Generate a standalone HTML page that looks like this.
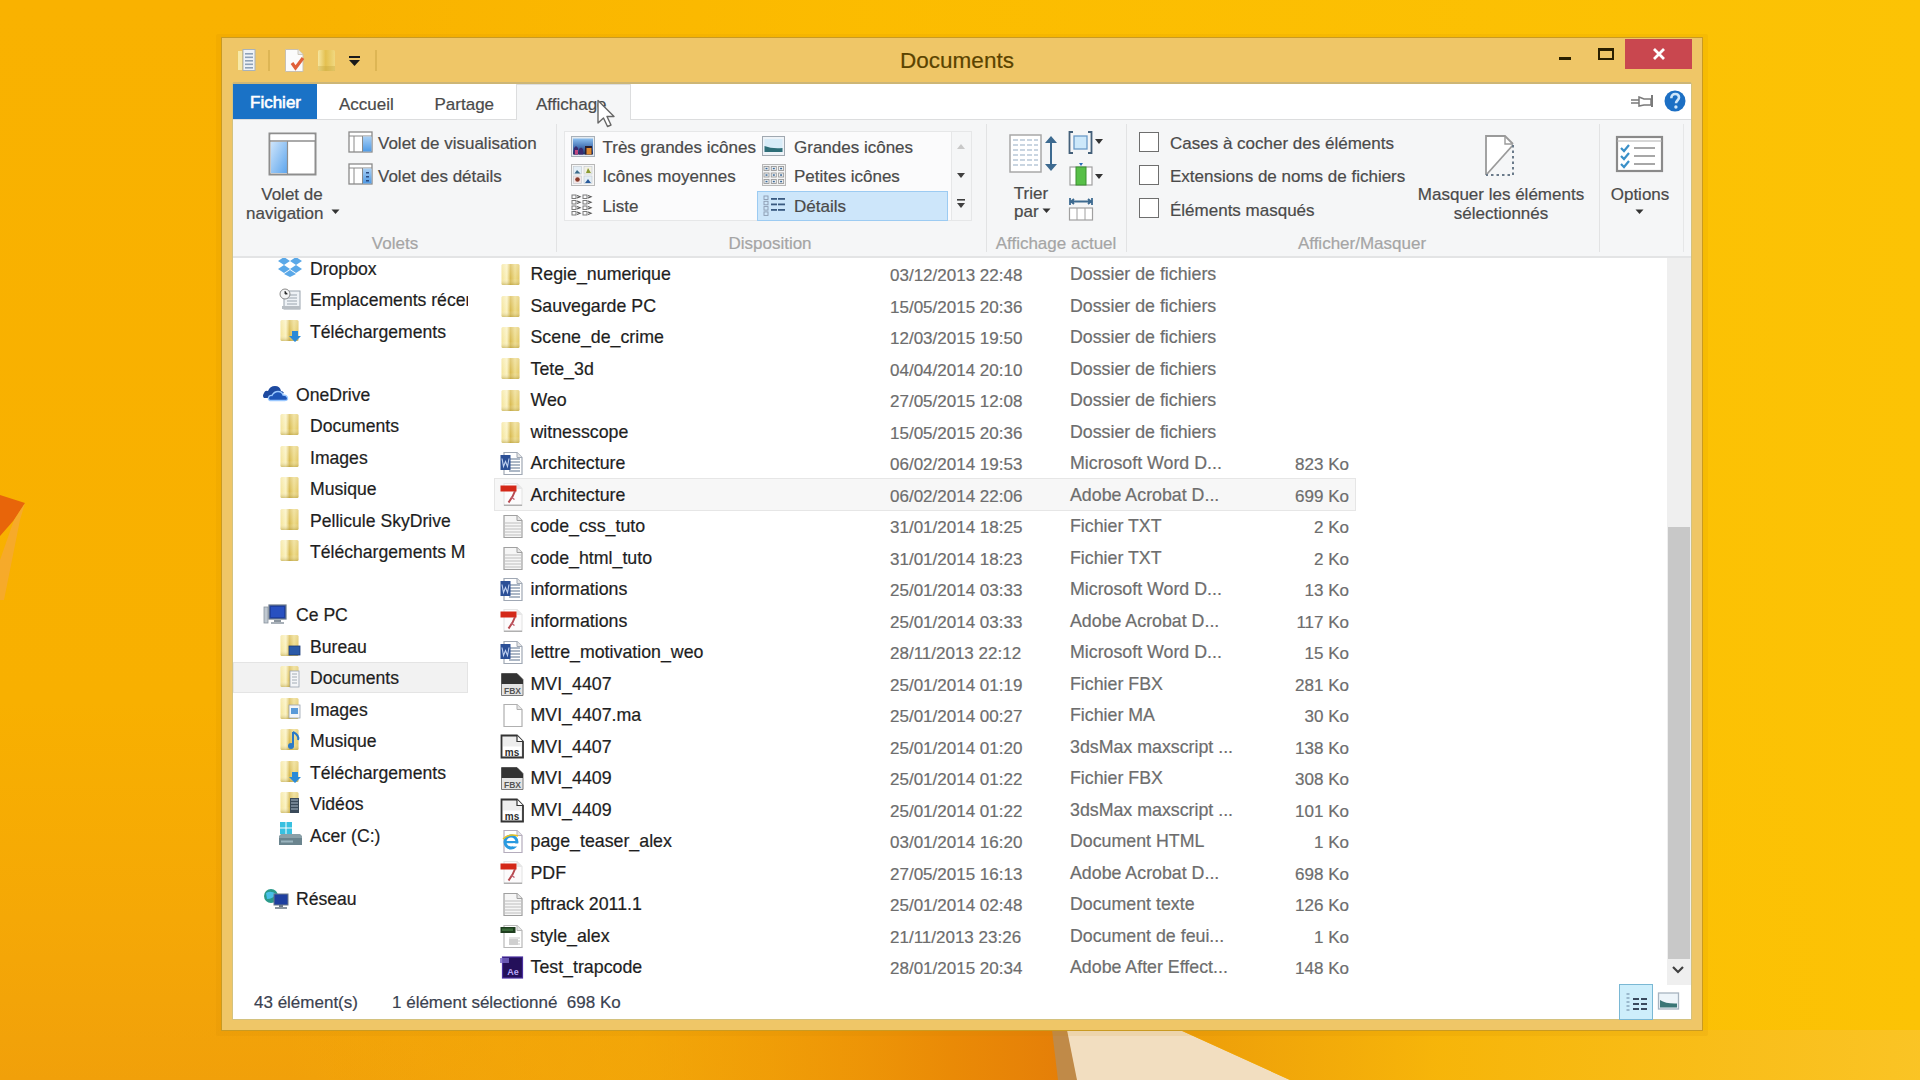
<!DOCTYPE html>
<html><head><meta charset="utf-8">
<style>
*{margin:0;padding:0;box-sizing:border-box}
html,body{width:1920px;height:1080px;overflow:hidden}
body{position:relative;font-family:"Liberation Sans",sans-serif;background:#F9B400}
.a{position:absolute}
.t{position:absolute;white-space:pre;line-height:1;color:#1E1E1E;-webkit-text-stroke:0.2px currentColor}
#w{position:absolute;left:0;top:0;width:1920px;height:1080px;}
</style></head><body>

<div id="w">
<div class="a" style="left:0;top:0;width:1920px;height:1080px;background:linear-gradient(180deg,#F9B200 0%,#F8B000 65%,#F5A806 85%,#F1A00A 100%)"></div>
<div class="a" style="left:0;top:0;width:1920px;height:1080px;background:linear-gradient(90deg,rgba(253,192,0,0) 15%,rgba(253,192,0,0.7) 45%,rgba(252,195,5,1) 100%)"></div>
<svg class="a" style="left:0px;top:0px" width="1920" height="1080" viewBox="0 0 1920 1080">
<defs>
<linearGradient id="wl" x1="0" y1="0" x2="1" y2="0"><stop offset="0" stop-color="#F2A20A" stop-opacity="0"/><stop offset="0.6" stop-color="#F0A00A" stop-opacity="0.6"/><stop offset="0.9" stop-color="#EA8A06"/><stop offset="1" stop-color="#E57F08"/></linearGradient>
<linearGradient id="wr" x1="0" y1="0" x2="1" y2="0"><stop offset="0" stop-color="#EC9A0A"/><stop offset="0.35" stop-color="#F6B40A"/><stop offset="1" stop-color="#FAC428"/></linearGradient>
</defs>
<polygon points="0,1030 1054,1030 1060,1080 0,1080" fill="url(#wl)"/>
<polygon points="1052,1030 1068,1030 1078,1080 1058,1080" fill="#C08A48"/>
<polygon points="1067,1030 1180,1030 1290,1080 1077,1080" fill="#F2DEC0"/>
<polygon points="1180,1030 1920,1030 1920,1080 1290,1080" fill="url(#wr)" opacity="0.9"/>
<polygon points="0,495 25,503 14,520 0,536" fill="#E8650A"/>
<polygon points="14,520 25,503 20,520 4,600 0,600 0,560" fill="#F5A838" opacity="0.75"/>
</svg>
<div class="a" style="left:216px;top:34px;width:1492px;height:1002px;background:rgba(200,130,0,0.10);border-radius:2px"></div>
<div class="a" style="left:221px;top:37px;width:1482px;height:994px;background:#EFC667;border:1px solid #C99A22"></div>
<div class="a" style="left:232px;top:83px;width:1460px;height:937px;border:1px solid #D4C27E"></div>
<div class="t" style="left:657px;width:600px;text-align:center;top:50.45px;font-size:22.5px;color:#5A4300;font-weight:400;">Documents</div>
<svg class="a" style="left:236px;top:48px" width="21" height="25" viewBox="0 0 21 25"><rect x="1" y="3" width="9" height="19" fill="#EBC865"/><rect x="2" y="3" width="4" height="19" fill="#F8E9A8"/>
<rect x="7" y="1.5" width="12" height="21" fill="#EEF2F6" stroke="#A8B2BC" stroke-width="1"/><rect x="9" y="5" width="8" height="1.6" fill="#8FA2B8"/><rect x="9" y="8.5" width="8" height="1.6" fill="#8FA2B8"/><rect x="9" y="12" width="8" height="1.6" fill="#8FA2B8"/><rect x="9" y="15.5" width="8" height="1.6" fill="#8FA2B8"/><rect x="9" y="19" width="8" height="1.6" fill="#8FA2B8"/></svg>
<div class="a" style="left:268px;top:50px;width:2px;height:21px;background:#D8B050;opacity:.8"></div>
<svg class="a" style="left:284px;top:48px" width="22" height="25" viewBox="0 0 22 25"><path d="M1.5 1.5 H14 L19 6.5 V23.5 H1.5 Z" fill="#FBFBFB" stroke="#C8C0B0" stroke-width="1"/><path d="M14 1.5 V6.5 H19" fill="#E8E8E8" stroke="#C8C0B0" stroke-width="0.8"/>
<path d="M8 15 L11.5 20 L19 10" stroke="#E0603A" stroke-width="3.2" fill="none"/></svg>
<svg class="a" style="left:316px;top:48px" width="22" height="25" viewBox="0 0 22 25"><defs><linearGradient id="qf" x1="0" y1="0" x2="1" y2="0"><stop offset="0" stop-color="#F6E6A0"/><stop offset="0.45" stop-color="#E4C050"/><stop offset="1" stop-color="#F0D880"/></linearGradient></defs><rect x="2" y="2" width="17" height="21" rx="1.5" fill="url(#qf)"/><rect x="2" y="18" width="17" height="5" fill="#C8A840" opacity="0.4"/></svg>
<svg class="a" style="left:348px;top:55px" width="13" height="14" viewBox="0 0 13 14"><rect x="1" y="1" width="11" height="2" fill="#1A1A1A"/><path d="M1 5 H12 L6.5 11 Z" fill="#1A1A1A"/></svg>
<div class="a" style="left:375px;top:50px;width:2px;height:21px;background:#D8B050;opacity:.8"></div>
<div class="a" style="left:1559px;top:57px;width:12px;height:3px;background:#2A2000"></div>
<div class="a" style="left:1598px;top:48px;width:16px;height:12px;border:2px solid #2A2000;border-top-width:3px"></div>
<div class="a" style="left:1625px;top:39px;width:67px;height:30px;background:#C9474F"></div>
<svg class="a" style="left:1652px;top:47px" width="14" height="14" viewBox="0 0 14 14"><path d="M2 2 L12 12 M12 2 L2 12" stroke="#FFFFFF" stroke-width="2.8"/></svg>
<div class="a" style="left:233px;top:84px;width:1458px;height:935px;background:#FFFFFF"></div>
<div class="a" style="left:233px;top:82px;width:1458px;height:2px;background:#CDB676"></div>
<div class="a" style="left:233px;top:119px;width:1458px;height:139px;background:#F5F6F7;border-top:1px solid #DCDDDE;border-bottom:2px solid #E3E4E5"></div>
<div class="a" style="left:233px;top:84px;width:84px;height:35px;background:#1A72C6"></div>
<div class="t" style="left:250px;top:94.11px;font-size:17px;color:#FFFFFF;font-weight:400;-webkit-text-stroke:0.6px #FFFFFF">Fichier</div>
<div class="t" style="left:339px;top:95.61px;font-size:17px;color:#4A4A4A;font-weight:400;">Accueil</div>
<div class="t" style="left:434.5px;top:95.61px;font-size:17px;color:#4A4A4A;font-weight:400;">Partage</div>
<div class="a" style="left:516px;top:84px;width:115px;height:36px;background:#F5F6F7;border:1px solid #DCDDDE;border-bottom:none"></div>
<div class="t" style="left:536px;top:96.11px;font-size:17px;color:#4A4A4A;font-weight:400;">Affichage</div>
<svg class="a" style="left:1630px;top:93px" width="26" height="16" viewBox="0 0 26 16"><path d="M1 7 H9 M1 10 H9" stroke="#7A7A7A" stroke-width="1.4"/><path d="M9 4 L14 6 H21 V12 H14 L9 13 Z" fill="none" stroke="#7A7A7A" stroke-width="1.5"/><path d="M22 2 V14" stroke="#7A7A7A" stroke-width="2"/></svg>
<svg class="a" style="left:1663px;top:89px" width="24" height="24" viewBox="0 0 24 24"><circle cx="12" cy="12" r="10.5" fill="#1C6FC4"/><path d="M8.3 9.2 C8.3 6.5 10 5 12.2 5 C14.5 5 16 6.5 16 8.6 C16 11 13 11.5 13 14.2" fill="none" stroke="#CFE6FA" stroke-width="2.6"/><circle cx="12.9" cy="18" r="1.7" fill="#CFE6FA"/></svg>
<svg class="a" style="left:268px;top:132px" width="50" height="45" viewBox="0 0 50 45"><rect x="1.5" y="1.5" width="46" height="41" fill="#FFFFFF" stroke="#8E8E8E" stroke-width="2"/><rect x="2.5" y="2.5" width="44" height="6" fill="#FFFFFF"/><line x1="2" y1="9" x2="47" y2="9" stroke="#8E8E8E" stroke-width="1.5"/>
<defs><linearGradient id="np" x1="0" y1="0" x2="1" y2="1"><stop offset="0" stop-color="#CDE4FA"/><stop offset="1" stop-color="#5EA6EE"/></linearGradient></defs>
<rect x="3" y="10" width="16" height="31" fill="url(#np)"/><line x1="19.5" y1="9" x2="19.5" y2="42" stroke="#8E8E8E" stroke-width="1.2"/></svg>
<div class="t" style="left:-8px;width:600px;text-align:center;top:186.01px;font-size:17px;color:#4A4A4A;font-weight:400;">Volet de</div>
<div class="t" style="left:246px;top:204.91px;font-size:17px;color:#4A4A4A;font-weight:400;">navigation</div>
<svg class="a" style="left:331px;top:209px" width="9" height="6" viewBox="0 0 9 6"><path d="M0.5 0.5 H8.5 L4.5 5 Z" fill="#333"/></svg>
<svg class="a" style="left:348px;top:131px" width="25" height="22" viewBox="0 0 25 22"><defs><linearGradient id="vp" x1="0" y1="0" x2="0" y2="1"><stop offset="0" stop-color="#A9D0F5"/><stop offset="1" stop-color="#4F9BE6"/></linearGradient></defs>
<rect x="1" y="1" width="23" height="20" fill="#FFF" stroke="#8A8A8A" stroke-width="1.3"/><line x1="1" y1="5" x2="24" y2="5" stroke="#8A8A8A" stroke-width="1"/><line x1="6" y1="5" x2="6" y2="21" stroke="#8A8A8A" stroke-width="1"/><rect x="15" y="5.5" width="8.5" height="15" fill="url(#vp)"/><line x1="14.5" y1="5" x2="14.5" y2="21" stroke="#8A8A8A" stroke-width="1"/></svg>
<div class="t" style="left:378px;top:135.31px;font-size:17px;color:#4A4A4A;font-weight:400;">Volet de visualisation</div>
<svg class="a" style="left:348px;top:163px" width="25" height="22" viewBox="0 0 25 22"><rect x="1" y="1" width="23" height="20" fill="#FFF" stroke="#8A8A8A" stroke-width="1.3"/><line x1="1" y1="5" x2="24" y2="5" stroke="#8A8A8A" stroke-width="1"/><line x1="6" y1="5" x2="6" y2="21" stroke="#8A8A8A" stroke-width="1"/><rect x="15" y="5.5" width="8.5" height="15" fill="url(#vp)"/><line x1="14.5" y1="5" x2="14.5" y2="21" stroke="#8A8A8A" stroke-width="1"/><rect x="18" y="9" width="3" height="1.5" fill="#2A4A80"/><rect x="18" y="13" width="3" height="1.5" fill="#2A4A80"/><rect x="18" y="17" width="3" height="1.5" fill="#2A4A80"/></svg>
<div class="t" style="left:378px;top:168.01px;font-size:17px;color:#4A4A4A;font-weight:400;">Volet des détails</div>
<div class="t" style="left:95px;width:600px;text-align:center;top:234.61px;font-size:17px;color:#A5A5A5;font-weight:400;">Volets</div>
<div class="a" style="left:556px;top:124px;width:1px;height:128px;background:#E2E3E4"></div>
<div class="a" style="left:564px;top:131px;width:408px;height:90px;background:#FBFBFC;border:1px solid #E6E7E8"></div>
<div class="a" style="left:951px;top:132px;width:20px;height:88px;background:#F5F6F7;border-left:1px solid #E6E7E8"></div>
<svg class="a" style="left:955px;top:140px" width="12" height="75" viewBox="0 0 12 75"><path d="M2 9 H10 L6 4 Z" fill="#C8C8C8"/><path d="M2 33 H10 L6 38 Z" fill="#404040"/><rect x="2" y="59" width="8" height="1.6" fill="#404040"/><path d="M2 63 H10 L6 68 Z" fill="#404040"/></svg>
<div class="a" style="left:757px;top:191px;width:191px;height:30px;background:#CDE6FA;border:1px solid #9CCBF2"></div>
<svg class="a" style="left:571px;top:136px" width="24" height="21" viewBox="0 0 24 21"><defs><linearGradient id="xlg" x1="0" y1="0" x2="0" y2="1"><stop offset="0" stop-color="#8CC0F0"/><stop offset="0.5" stop-color="#4A78B8"/><stop offset="1" stop-color="#1E2A60"/></linearGradient></defs><rect x="0.5" y="0.5" width="23" height="20" fill="#E4EAF0" stroke="#A8B0B8"/><rect x="2" y="2.5" width="20" height="16" fill="url(#xlg)"/><path d="M3 18.5 V12 L5 10 L7 12 V18.5 Z M8 18.5 V13 L10 11.5 L12 13 V18.5 Z" fill="#3A2A70"/><path d="M4 18.5 V14 H7 V18.5 Z" fill="#C04880"/><rect x="14" y="10" width="7" height="8.5" fill="#2A2030"/><rect x="15.5" y="12" width="5" height="6.5" fill="#E08A30"/></svg>
<div class="t" style="left:602.5px;top:139.11px;font-size:17px;color:#4A4A4A;font-weight:400;">Très grandes icônes</div>
<svg class="a" style="left:762px;top:136px" width="23" height="20" viewBox="0 0 23 20"><rect x="0.5" y="0.5" width="22" height="19" fill="#EEF3F8" stroke="#A0A8B0"/><rect x="2.5" y="3" width="18" height="13" fill="#D8ECF8"/><path d="M2.5 16 L2.5 10 Q10 13 20.5 12 V16 Z" fill="#2E6E78"/></svg>
<div class="t" style="left:794px;top:139.11px;font-size:17px;color:#4A4A4A;font-weight:400;">Grandes icônes</div>
<svg class="a" style="left:571px;top:164px" width="24" height="22" viewBox="0 0 24 22"><rect x="0.5" y="0.5" width="23" height="21" fill="#F6F6F6" stroke="#B8B8B8"/><rect x="2.5" y="2.5" width="8" height="7.5" fill="#E4EEF6" stroke="#C0C8D0" stroke-width="0.6"/><path d="M3.5 9.5 L6 6 L9.5 9.5 Z" fill="#3A6A8A"/><rect x="13" y="2.5" width="8" height="7.5" fill="#F2F0E4" stroke="#C0C8D0" stroke-width="0.6"/><path d="M15 9 L17 4 L20 9 Z" fill="#8A9A30"/><rect x="2.5" y="12" width="8" height="7.5" fill="#F4E6E6" stroke="#C0C8D0" stroke-width="0.6"/><circle cx="6.5" cy="15.5" r="2.3" fill="#8A3A2A"/><rect x="13" y="12" width="8" height="7.5" fill="#E4EEF6" stroke="#C0C8D0" stroke-width="0.6"/><path d="M14 19 L17 15 L20 19 Z" fill="#2A5A9A"/></svg>
<div class="t" style="left:602.5px;top:168.11px;font-size:17px;color:#4A4A4A;font-weight:400;">Icônes moyennes</div>
<svg class="a" style="left:762px;top:164px" width="24" height="22" viewBox="0 0 24 22"><rect x="0.5" y="0.5" width="23" height="21" fill="#F4F4F4" stroke="#B8B8B8"/><rect x="2.0" y="2.5" width="5" height="4" fill="none" stroke="#9A9A9A" stroke-width="0.9"/><rect x="3.5" y="3.8" width="2" height="1.5" fill="#3A6A9A"/><rect x="9.3" y="2.5" width="5" height="4" fill="none" stroke="#9A9A9A" stroke-width="0.9"/><rect x="10.8" y="3.8" width="2" height="1.5" fill="#3A6A9A"/><rect x="16.6" y="2.5" width="5" height="4" fill="none" stroke="#9A9A9A" stroke-width="0.9"/><rect x="18.1" y="3.8" width="2" height="1.5" fill="#3A6A9A"/><rect x="2.0" y="9.0" width="5" height="4" fill="none" stroke="#9A9A9A" stroke-width="0.9"/><rect x="3.5" y="10.3" width="2" height="1.5" fill="#3A6A9A"/><rect x="9.3" y="9.0" width="5" height="4" fill="none" stroke="#9A9A9A" stroke-width="0.9"/><rect x="10.8" y="10.3" width="2" height="1.5" fill="#3A6A9A"/><rect x="16.6" y="9.0" width="5" height="4" fill="none" stroke="#9A9A9A" stroke-width="0.9"/><rect x="18.1" y="10.3" width="2" height="1.5" fill="#3A6A9A"/><rect x="2.0" y="15.5" width="5" height="4" fill="none" stroke="#9A9A9A" stroke-width="0.9"/><rect x="3.5" y="16.8" width="2" height="1.5" fill="#3A6A9A"/><rect x="9.3" y="15.5" width="5" height="4" fill="none" stroke="#9A9A9A" stroke-width="0.9"/><rect x="10.8" y="16.8" width="2" height="1.5" fill="#3A6A9A"/><rect x="16.6" y="15.5" width="5" height="4" fill="none" stroke="#9A9A9A" stroke-width="0.9"/><rect x="18.1" y="16.8" width="2" height="1.5" fill="#3A6A9A"/></svg>
<div class="t" style="left:794px;top:168.11px;font-size:17px;color:#4A4A4A;font-weight:400;">Petites icônes</div>
<svg class="a" style="left:571px;top:194px" width="23" height="22" viewBox="0 0 23 22"><rect x="1" y="1.0" width="4" height="3.5" fill="none" stroke="#7A7A7A" stroke-width="1"/><path d="M6 1.5 L9 2.75 L6 4.0" fill="none" stroke="#5A5A5A" stroke-width="1.2"/><rect x="12" y="1.0" width="4" height="3.5" fill="none" stroke="#7A7A7A" stroke-width="1"/><path d="M17 1.5 L20 2.75 L17 4.0" fill="none" stroke="#5A5A5A" stroke-width="1.2"/><rect x="1" y="6.5" width="4" height="3.5" fill="none" stroke="#7A7A7A" stroke-width="1"/><path d="M6 7.0 L9 8.25 L6 9.5" fill="none" stroke="#5A5A5A" stroke-width="1.2"/><rect x="12" y="6.5" width="4" height="3.5" fill="none" stroke="#7A7A7A" stroke-width="1"/><path d="M17 7.0 L20 8.25 L17 9.5" fill="none" stroke="#5A5A5A" stroke-width="1.2"/><rect x="1" y="12.0" width="4" height="3.5" fill="none" stroke="#7A7A7A" stroke-width="1"/><path d="M6 12.5 L9 13.75 L6 15.0" fill="none" stroke="#5A5A5A" stroke-width="1.2"/><rect x="12" y="12.0" width="4" height="3.5" fill="none" stroke="#7A7A7A" stroke-width="1"/><path d="M17 12.5 L20 13.75 L17 15.0" fill="none" stroke="#5A5A5A" stroke-width="1.2"/><rect x="1" y="17.5" width="4" height="3.5" fill="none" stroke="#7A7A7A" stroke-width="1"/><path d="M6 18.0 L9 19.25 L6 20.5" fill="none" stroke="#5A5A5A" stroke-width="1.2"/><rect x="12" y="17.5" width="4" height="3.5" fill="none" stroke="#7A7A7A" stroke-width="1"/><path d="M17 18.0 L20 19.25 L17 20.5" fill="none" stroke="#5A5A5A" stroke-width="1.2"/></svg>
<div class="t" style="left:602.5px;top:198.11px;font-size:17px;color:#4A4A4A;font-weight:400;">Liste</div>
<svg class="a" style="left:763px;top:195px" width="23" height="22" viewBox="0 0 23 22"><rect x="1" y="1.0" width="4" height="3.5" fill="none" stroke="#8A9AB0" stroke-width="0.9"/><rect x="1" y="6.3" width="4" height="3.5" fill="none" stroke="#8A9AB0" stroke-width="0.9"/><rect x="1" y="11.6" width="4" height="3.5" fill="none" stroke="#8A9AB0" stroke-width="0.9"/><rect x="1" y="16.9" width="4" height="3.5" fill="none" stroke="#8A9AB0" stroke-width="0.9"/><rect x="8" y="3.0" width="6" height="1.8" fill="#3A5A80"/><rect x="15" y="3.0" width="7" height="1.8" fill="#3A5A80"/><rect x="8" y="8.5" width="6" height="1.8" fill="#3A5A80"/><rect x="15" y="8.5" width="7" height="1.8" fill="#3A5A80"/><rect x="8" y="14.0" width="6" height="1.8" fill="#3A5A80"/><rect x="15" y="14.0" width="7" height="1.8" fill="#3A5A80"/></svg>
<div class="t" style="left:794px;top:198.11px;font-size:17px;color:#4A4A4A;font-weight:400;">Détails</div>
<div class="t" style="left:470px;width:600px;text-align:center;top:234.61px;font-size:17px;color:#A5A5A5;font-weight:400;">Disposition</div>
<div class="a" style="left:986px;top:124px;width:1px;height:128px;background:#E2E3E4"></div>
<svg class="a" style="left:1008px;top:133px" width="52" height="42" viewBox="0 0 52 42"><rect x="2" y="2" width="31" height="37" fill="#FFFFFF" stroke="#A8A8A8" stroke-width="1.5"/>
<g stroke="#B8C8D8" stroke-width="1.6"><line x1="5" y1="7" x2="30" y2="7" stroke-dasharray="5 2"/><line x1="5" y1="12" x2="30" y2="12" stroke-dasharray="5 2"/><line x1="5" y1="17" x2="30" y2="17" stroke-dasharray="5 2"/><line x1="5" y1="22" x2="30" y2="22" stroke-dasharray="5 2"/><line x1="5" y1="27" x2="30" y2="27" stroke-dasharray="5 2"/><line x1="5" y1="32" x2="30" y2="32" stroke-dasharray="5 2"/></g>
<path d="M43 3 L37 10 H42 V31 H37 L43 38 L49 31 H44 V10 H49 Z" fill="#3D6A90"/></svg>
<div class="t" style="left:731px;width:600px;text-align:center;top:185.41px;font-size:17px;color:#4A4A4A;font-weight:400;">Trier</div>
<div class="t" style="left:1014px;top:203.11px;font-size:17px;color:#4A4A4A;font-weight:400;">par</div>
<svg class="a" style="left:1042px;top:208px" width="9" height="6" viewBox="0 0 9 6"><path d="M0.5 0.5 H8.5 L4.5 5 Z" fill="#333"/></svg>
<svg class="a" style="left:1068px;top:130px" width="38" height="26" viewBox="0 0 38 26"><path d="M5 2 H1.5 V23 H5 M20 2 H23.5 V23 H20" stroke="#44607A" stroke-width="1.8" fill="none"/><rect x="6" y="6" width="13" height="13" fill="#CDE8FA" stroke="#6A9AC8" stroke-width="1.3"/><path d="M27 9 H35 L31 14 Z" fill="#333"/></svg>
<svg class="a" style="left:1068px;top:162px" width="38" height="26" viewBox="0 0 38 26"><rect x="2" y="5" width="22" height="18" fill="#FFF" stroke="#A0A0A0" stroke-width="1.2"/><rect x="8" y="5" width="10" height="18" fill="#58C048" stroke="#3A9030" stroke-width="1"/><path d="M11 1 H15 L13 4 Z" fill="#2A6CB8"/><path d="M27 12 H35 L31 17 Z" fill="#333"/></svg>
<svg class="a" style="left:1068px;top:195px" width="26" height="27" viewBox="0 0 26 27"><path d="M2 3 V10 M24 3 V10 M3 6.5 H23 M3 6.5 L6 4 M3 6.5 L6 9 M23 6.5 L20 4 M23 6.5 L20 9" stroke="#3D6A90" stroke-width="1.8" fill="none"/><rect x="1.5" y="13" width="23" height="12" fill="#FFF" stroke="#A0A0A0" stroke-width="1.2"/><line x1="9" y1="13" x2="9" y2="25" stroke="#A0A0A0"/><line x1="17" y1="13" x2="17" y2="25" stroke="#A0A0A0"/></svg>
<div class="t" style="left:756px;width:600px;text-align:center;top:234.61px;font-size:17px;color:#A5A5A5;font-weight:400;">Affichage actuel</div>
<div class="a" style="left:1126px;top:124px;width:1px;height:128px;background:#E2E3E4"></div>
<div class="a" style="left:1139px;top:132px;width:20px;height:20px;background:#FFFFFF;border:1.5px solid #6E6E6E"></div>
<div class="a" style="left:1139px;top:165px;width:20px;height:20px;background:#FFFFFF;border:1.5px solid #6E6E6E"></div>
<div class="a" style="left:1139px;top:198px;width:20px;height:20px;background:#FFFFFF;border:1.5px solid #6E6E6E"></div>
<div class="t" style="left:1170px;top:135.36px;font-size:17px;color:#4A4A4A;font-weight:400;">Cases à cocher des éléments</div>
<div class="t" style="left:1170px;top:168.11px;font-size:17px;color:#4A4A4A;font-weight:400;">Extensions de noms de fichiers</div>
<div class="t" style="left:1170px;top:201.61px;font-size:17px;color:#4A4A4A;font-weight:400;">Éléments masqués</div>
<svg class="a" style="left:1483px;top:133px" width="40" height="46" viewBox="0 0 40 46"><path d="M3 42 V3 H22 L30 11" fill="#FFFFFF" stroke="#9A9A9A" stroke-width="1.8"/><path d="M22 3 V11 H30" fill="none" stroke="#9A9A9A" stroke-width="1.4"/><path d="M4 41 L30 12" stroke="#9A9A9A" stroke-width="1.8"/><path d="M30 12 V42 H3" fill="none" stroke="#6A7A8A" stroke-width="2" stroke-dasharray="2.5 3"/></svg>
<div class="t" style="left:1201px;width:600px;text-align:center;top:185.61px;font-size:17px;color:#4A4A4A;font-weight:400;">Masquer les éléments</div>
<div class="t" style="left:1201px;width:600px;text-align:center;top:204.61px;font-size:17px;color:#4A4A4A;font-weight:400;">sélectionnés</div>
<div class="t" style="left:1062px;width:600px;text-align:center;top:234.61px;font-size:17px;color:#A5A5A5;font-weight:400;">Afficher/Masquer</div>
<div class="a" style="left:1599px;top:124px;width:1px;height:128px;background:#E2E3E4"></div>
<svg class="a" style="left:1615px;top:135px" width="50" height="40" viewBox="0 0 50 40"><rect x="2" y="2" width="45" height="34" fill="#FFFFFF" stroke="#8A8A8A" stroke-width="2.2"/><line x1="2" y1="6" x2="47" y2="6" stroke="#B0B0B0" stroke-width="1.2"/>
<path d="M6 13 L9 16 L14 10 M6 21 L9 24 L14 18 M6 29 L9 32 L14 26" stroke="#3A90C8" stroke-width="2.2" fill="none"/>
<path d="M19 13 H40 M19 21 H40 M19 29 H40" stroke="#8A8A8A" stroke-width="1.6"/></svg>
<div class="t" style="left:1340px;width:600px;text-align:center;top:185.61px;font-size:17px;color:#4A4A4A;font-weight:400;">Options</div>
<svg class="a" style="left:1635px;top:209px" width="9" height="6" viewBox="0 0 9 6"><path d="M0.5 0.5 H8.5 L4.5 5 Z" fill="#333"/></svg>
<div class="a" style="left:1683px;top:124px;width:1px;height:128px;background:#E6E7E8"></div>
<div class="a" style="left:233px;top:662px;width:235px;height:31px;background:#F2F2F2;border:1px solid #E4E4E4"></div>
<div class="a" style="left:0;top:0;width:1920px;height:1080px;clip-path:polygon(233px 258px,468px 258px,468px 985px,233px 985px)">
<div class="t" style="left:310px;top:260.50px;font-size:17.6px;color:#1E1E1E;font-weight:400;">Dropbox</div>
<svg class="a" style="left:277px;top:256px" width="26" height="22" viewBox="0 0 26 22"><path d="M7 1 L1 5 L7 9 L13 5 Z M19 1 L13 5 L19 9 L25 5 Z M1 13 L7 9 L13 13 L7 17 Z M25 13 L19 9 L13 13 L19 17 Z M7 18 L13 14 L19 18 L13 21 Z" fill="#5AA8E8"/></svg>
<div class="t" style="left:310px;top:292.00px;font-size:17.6px;color:#1E1E1E;font-weight:400;">Emplacements récents</div>
<svg class="a" style="left:279px;top:288px" width="24" height="23" viewBox="0 0 24 23"><rect x="5" y="3" width="16" height="18" fill="#EEF2F6" stroke="#9AA4AE"/><path d="M8 7 H18 M8 10 H18 M8 13 H18 M8 16 H18" stroke="#9AA4AE" stroke-width="1.2"/><circle cx="6" cy="6" r="5" fill="#F4F4F4" stroke="#8A8A8A"/><path d="M6 3 V6 H8.5" stroke="#444" stroke-width="1"/><rect x="3" y="18" width="18" height="3" fill="#B8BEC4"/></svg>
<div class="t" style="left:310px;top:323.50px;font-size:17.6px;color:#1E1E1E;font-weight:400;">Téléchargements</div>
<svg class="a" style="left:279px;top:319px" width="22" height="23" viewBox="0 0 22 23"><defs><linearGradient id="fg279_319" x1="0" y1="0" x2="1" y2="0"><stop offset="0" stop-color="#F4E49A"/><stop offset="0.3" stop-color="#FBF3C4"/><stop offset="0.5" stop-color="#D9BC55"/><stop offset="0.75" stop-color="#EEDC8C"/><stop offset="1" stop-color="#E2C868"/></linearGradient>
<linearGradient id="fg279_319b" x1="0" y1="0" x2="0" y2="1"><stop offset="0" stop-color="#FFFFFF" stop-opacity="0.25"/><stop offset="0.7" stop-color="#FFFFFF" stop-opacity="0"/><stop offset="1" stop-color="#A89030" stop-opacity="0.45"/></linearGradient></defs>
<path d="M1.5 2.5 Q1.5 1 3 1 H18 Q19.5 1 19.5 2.5 V20.5 Q19.5 22 18 22 H3 Q1.5 22 1.5 20.5 Z" fill="url(#fg279_319)"/><path d="M1.5 2.5 Q1.5 1 3 1 H18 Q19.5 1 19.5 2.5 V20.5 Q19.5 22 18 22 H3 Q1.5 22 1.5 20.5 Z" fill="url(#fg279_319b)"/><path d="M13 12 H19 V17 H22 L16 23 L10 17 H13 Z" fill="#2A8AD8"/></svg>
<div class="t" style="left:296px;top:386.50px;font-size:17.6px;color:#1E1E1E;font-weight:400;">OneDrive</div>
<svg class="a" style="left:262px;top:383px" width="28" height="20" viewBox="0 0 28 20"><path d="M2 15 Q0 13 2 10 Q3 7 6 8 Q8 3 13 3 Q18 3 19 8 Q21 8 22 10 L10 15 Z" fill="#1E4AA0"/><path d="M8 17.5 Q6 17 6.5 14.5 Q7 12 10 12.5 Q12 8.5 16 8.5 Q20 8.5 21 12 Q25 12 25.5 15 Q26 17.5 23 17.5 Z" fill="#1E56B8" stroke="#9AC8FF" stroke-width="1.3"/></svg>
<div class="t" style="left:310px;top:418.00px;font-size:17.6px;color:#1E1E1E;font-weight:400;">Documents</div>
<svg class="a" style="left:279px;top:413px" width="22" height="23" viewBox="0 0 22 23"><defs><linearGradient id="fg279_413" x1="0" y1="0" x2="1" y2="0"><stop offset="0" stop-color="#F4E49A"/><stop offset="0.3" stop-color="#FBF3C4"/><stop offset="0.5" stop-color="#D9BC55"/><stop offset="0.75" stop-color="#EEDC8C"/><stop offset="1" stop-color="#E2C868"/></linearGradient>
<linearGradient id="fg279_413b" x1="0" y1="0" x2="0" y2="1"><stop offset="0" stop-color="#FFFFFF" stop-opacity="0.25"/><stop offset="0.7" stop-color="#FFFFFF" stop-opacity="0"/><stop offset="1" stop-color="#A89030" stop-opacity="0.45"/></linearGradient></defs>
<path d="M1.5 2.5 Q1.5 1 3 1 H18 Q19.5 1 19.5 2.5 V20.5 Q19.5 22 18 22 H3 Q1.5 22 1.5 20.5 Z" fill="url(#fg279_413)"/><path d="M1.5 2.5 Q1.5 1 3 1 H18 Q19.5 1 19.5 2.5 V20.5 Q19.5 22 18 22 H3 Q1.5 22 1.5 20.5 Z" fill="url(#fg279_413b)"/></svg>
<div class="t" style="left:310px;top:449.50px;font-size:17.6px;color:#1E1E1E;font-weight:400;">Images</div>
<svg class="a" style="left:279px;top:445px" width="22" height="23" viewBox="0 0 22 23"><defs><linearGradient id="fg279_445" x1="0" y1="0" x2="1" y2="0"><stop offset="0" stop-color="#F4E49A"/><stop offset="0.3" stop-color="#FBF3C4"/><stop offset="0.5" stop-color="#D9BC55"/><stop offset="0.75" stop-color="#EEDC8C"/><stop offset="1" stop-color="#E2C868"/></linearGradient>
<linearGradient id="fg279_445b" x1="0" y1="0" x2="0" y2="1"><stop offset="0" stop-color="#FFFFFF" stop-opacity="0.25"/><stop offset="0.7" stop-color="#FFFFFF" stop-opacity="0"/><stop offset="1" stop-color="#A89030" stop-opacity="0.45"/></linearGradient></defs>
<path d="M1.5 2.5 Q1.5 1 3 1 H18 Q19.5 1 19.5 2.5 V20.5 Q19.5 22 18 22 H3 Q1.5 22 1.5 20.5 Z" fill="url(#fg279_445)"/><path d="M1.5 2.5 Q1.5 1 3 1 H18 Q19.5 1 19.5 2.5 V20.5 Q19.5 22 18 22 H3 Q1.5 22 1.5 20.5 Z" fill="url(#fg279_445b)"/></svg>
<div class="t" style="left:310px;top:481.00px;font-size:17.6px;color:#1E1E1E;font-weight:400;">Musique</div>
<svg class="a" style="left:279px;top:476px" width="22" height="23" viewBox="0 0 22 23"><defs><linearGradient id="fg279_476" x1="0" y1="0" x2="1" y2="0"><stop offset="0" stop-color="#F4E49A"/><stop offset="0.3" stop-color="#FBF3C4"/><stop offset="0.5" stop-color="#D9BC55"/><stop offset="0.75" stop-color="#EEDC8C"/><stop offset="1" stop-color="#E2C868"/></linearGradient>
<linearGradient id="fg279_476b" x1="0" y1="0" x2="0" y2="1"><stop offset="0" stop-color="#FFFFFF" stop-opacity="0.25"/><stop offset="0.7" stop-color="#FFFFFF" stop-opacity="0"/><stop offset="1" stop-color="#A89030" stop-opacity="0.45"/></linearGradient></defs>
<path d="M1.5 2.5 Q1.5 1 3 1 H18 Q19.5 1 19.5 2.5 V20.5 Q19.5 22 18 22 H3 Q1.5 22 1.5 20.5 Z" fill="url(#fg279_476)"/><path d="M1.5 2.5 Q1.5 1 3 1 H18 Q19.5 1 19.5 2.5 V20.5 Q19.5 22 18 22 H3 Q1.5 22 1.5 20.5 Z" fill="url(#fg279_476b)"/></svg>
<div class="t" style="left:310px;top:512.50px;font-size:17.6px;color:#1E1E1E;font-weight:400;">Pellicule SkyDrive</div>
<svg class="a" style="left:279px;top:508px" width="22" height="23" viewBox="0 0 22 23"><defs><linearGradient id="fg279_508" x1="0" y1="0" x2="1" y2="0"><stop offset="0" stop-color="#F4E49A"/><stop offset="0.3" stop-color="#FBF3C4"/><stop offset="0.5" stop-color="#D9BC55"/><stop offset="0.75" stop-color="#EEDC8C"/><stop offset="1" stop-color="#E2C868"/></linearGradient>
<linearGradient id="fg279_508b" x1="0" y1="0" x2="0" y2="1"><stop offset="0" stop-color="#FFFFFF" stop-opacity="0.25"/><stop offset="0.7" stop-color="#FFFFFF" stop-opacity="0"/><stop offset="1" stop-color="#A89030" stop-opacity="0.45"/></linearGradient></defs>
<path d="M1.5 2.5 Q1.5 1 3 1 H18 Q19.5 1 19.5 2.5 V20.5 Q19.5 22 18 22 H3 Q1.5 22 1.5 20.5 Z" fill="url(#fg279_508)"/><path d="M1.5 2.5 Q1.5 1 3 1 H18 Q19.5 1 19.5 2.5 V20.5 Q19.5 22 18 22 H3 Q1.5 22 1.5 20.5 Z" fill="url(#fg279_508b)"/></svg>
<div class="t" style="left:310px;top:544.00px;font-size:17.6px;color:#1E1E1E;font-weight:400;">Téléchargements M</div>
<svg class="a" style="left:279px;top:539px" width="22" height="23" viewBox="0 0 22 23"><defs><linearGradient id="fg279_539" x1="0" y1="0" x2="1" y2="0"><stop offset="0" stop-color="#F4E49A"/><stop offset="0.3" stop-color="#FBF3C4"/><stop offset="0.5" stop-color="#D9BC55"/><stop offset="0.75" stop-color="#EEDC8C"/><stop offset="1" stop-color="#E2C868"/></linearGradient>
<linearGradient id="fg279_539b" x1="0" y1="0" x2="0" y2="1"><stop offset="0" stop-color="#FFFFFF" stop-opacity="0.25"/><stop offset="0.7" stop-color="#FFFFFF" stop-opacity="0"/><stop offset="1" stop-color="#A89030" stop-opacity="0.45"/></linearGradient></defs>
<path d="M1.5 2.5 Q1.5 1 3 1 H18 Q19.5 1 19.5 2.5 V20.5 Q19.5 22 18 22 H3 Q1.5 22 1.5 20.5 Z" fill="url(#fg279_539)"/><path d="M1.5 2.5 Q1.5 1 3 1 H18 Q19.5 1 19.5 2.5 V20.5 Q19.5 22 18 22 H3 Q1.5 22 1.5 20.5 Z" fill="url(#fg279_539b)"/></svg>
<div class="t" style="left:296px;top:607.00px;font-size:17.6px;color:#1E1E1E;font-weight:400;">Ce PC</div>
<svg class="a" style="left:263px;top:603px" width="26" height="24" viewBox="0 0 26 24"><rect x="1" y="4" width="4" height="16" fill="#C0C8D0" stroke="#8A949E" stroke-width="0.8"/><rect x="6" y="2" width="17" height="14" fill="#1E3FA0" stroke="#6A7888" stroke-width="1.2"/><rect x="8" y="4" width="13" height="10" fill="#2850C0"/><rect x="11" y="17" width="7" height="2" fill="#8A949E"/><rect x="8" y="19" width="13" height="2" fill="#A8B0B8"/></svg>
<div class="t" style="left:310px;top:638.50px;font-size:17.6px;color:#1E1E1E;font-weight:400;">Bureau</div>
<svg class="a" style="left:279px;top:634px" width="22" height="23" viewBox="0 0 22 23"><defs><linearGradient id="fg279_634" x1="0" y1="0" x2="1" y2="0"><stop offset="0" stop-color="#F4E49A"/><stop offset="0.3" stop-color="#FBF3C4"/><stop offset="0.5" stop-color="#D9BC55"/><stop offset="0.75" stop-color="#EEDC8C"/><stop offset="1" stop-color="#E2C868"/></linearGradient>
<linearGradient id="fg279_634b" x1="0" y1="0" x2="0" y2="1"><stop offset="0" stop-color="#FFFFFF" stop-opacity="0.25"/><stop offset="0.7" stop-color="#FFFFFF" stop-opacity="0"/><stop offset="1" stop-color="#A89030" stop-opacity="0.45"/></linearGradient></defs>
<path d="M1.5 2.5 Q1.5 1 3 1 H18 Q19.5 1 19.5 2.5 V20.5 Q19.5 22 18 22 H3 Q1.5 22 1.5 20.5 Z" fill="url(#fg279_634)"/><path d="M1.5 2.5 Q1.5 1 3 1 H18 Q19.5 1 19.5 2.5 V20.5 Q19.5 22 18 22 H3 Q1.5 22 1.5 20.5 Z" fill="url(#fg279_634b)"/><rect x="10" y="12" width="11" height="9" fill="#2A5AA8" stroke="#1A3A78" stroke-width="0.8"/></svg>
<div class="t" style="left:310px;top:670.00px;font-size:17.6px;color:#1E1E1E;font-weight:400;">Documents</div>
<svg class="a" style="left:279px;top:665px" width="22" height="23" viewBox="0 0 22 23"><defs><linearGradient id="fg279_665" x1="0" y1="0" x2="1" y2="0"><stop offset="0" stop-color="#F4E49A"/><stop offset="0.3" stop-color="#FBF3C4"/><stop offset="0.5" stop-color="#D9BC55"/><stop offset="0.75" stop-color="#EEDC8C"/><stop offset="1" stop-color="#E2C868"/></linearGradient>
<linearGradient id="fg279_665b" x1="0" y1="0" x2="0" y2="1"><stop offset="0" stop-color="#FFFFFF" stop-opacity="0.25"/><stop offset="0.7" stop-color="#FFFFFF" stop-opacity="0"/><stop offset="1" stop-color="#A89030" stop-opacity="0.45"/></linearGradient></defs>
<path d="M1.5 2.5 Q1.5 1 3 1 H18 Q19.5 1 19.5 2.5 V20.5 Q19.5 22 18 22 H3 Q1.5 22 1.5 20.5 Z" fill="url(#fg279_665)"/><path d="M1.5 2.5 Q1.5 1 3 1 H18 Q19.5 1 19.5 2.5 V20.5 Q19.5 22 18 22 H3 Q1.5 22 1.5 20.5 Z" fill="url(#fg279_665b)"/><rect x="11" y="6" width="9" height="16" fill="#F4F6F8" stroke="#9AA4AE" stroke-width="0.8"/><path d="M13 9 H18 M13 12 H18 M13 15 H18 M13 18 H18" stroke="#9AA4AE" stroke-width="0.9"/></svg>
<div class="t" style="left:310px;top:701.50px;font-size:17.6px;color:#1E1E1E;font-weight:400;">Images</div>
<svg class="a" style="left:279px;top:697px" width="22" height="23" viewBox="0 0 22 23"><defs><linearGradient id="fg279_697" x1="0" y1="0" x2="1" y2="0"><stop offset="0" stop-color="#F4E49A"/><stop offset="0.3" stop-color="#FBF3C4"/><stop offset="0.5" stop-color="#D9BC55"/><stop offset="0.75" stop-color="#EEDC8C"/><stop offset="1" stop-color="#E2C868"/></linearGradient>
<linearGradient id="fg279_697b" x1="0" y1="0" x2="0" y2="1"><stop offset="0" stop-color="#FFFFFF" stop-opacity="0.25"/><stop offset="0.7" stop-color="#FFFFFF" stop-opacity="0"/><stop offset="1" stop-color="#A89030" stop-opacity="0.45"/></linearGradient></defs>
<path d="M1.5 2.5 Q1.5 1 3 1 H18 Q19.5 1 19.5 2.5 V20.5 Q19.5 22 18 22 H3 Q1.5 22 1.5 20.5 Z" fill="url(#fg279_697)"/><path d="M1.5 2.5 Q1.5 1 3 1 H18 Q19.5 1 19.5 2.5 V20.5 Q19.5 22 18 22 H3 Q1.5 22 1.5 20.5 Z" fill="url(#fg279_697b)"/><rect x="10" y="8" width="11" height="13" fill="#F4F6F8" stroke="#9AA4AE" stroke-width="0.8"/><rect x="12" y="11" width="7" height="6" fill="#5A9AD8"/></svg>
<div class="t" style="left:310px;top:733.00px;font-size:17.6px;color:#1E1E1E;font-weight:400;">Musique</div>
<svg class="a" style="left:279px;top:728px" width="22" height="23" viewBox="0 0 22 23"><defs><linearGradient id="fg279_728" x1="0" y1="0" x2="1" y2="0"><stop offset="0" stop-color="#F4E49A"/><stop offset="0.3" stop-color="#FBF3C4"/><stop offset="0.5" stop-color="#D9BC55"/><stop offset="0.75" stop-color="#EEDC8C"/><stop offset="1" stop-color="#E2C868"/></linearGradient>
<linearGradient id="fg279_728b" x1="0" y1="0" x2="0" y2="1"><stop offset="0" stop-color="#FFFFFF" stop-opacity="0.25"/><stop offset="0.7" stop-color="#FFFFFF" stop-opacity="0"/><stop offset="1" stop-color="#A89030" stop-opacity="0.45"/></linearGradient></defs>
<path d="M1.5 2.5 Q1.5 1 3 1 H18 Q19.5 1 19.5 2.5 V20.5 Q19.5 22 18 22 H3 Q1.5 22 1.5 20.5 Z" fill="url(#fg279_728)"/><path d="M1.5 2.5 Q1.5 1 3 1 H18 Q19.5 1 19.5 2.5 V20.5 Q19.5 22 18 22 H3 Q1.5 22 1.5 20.5 Z" fill="url(#fg279_728b)"/><path d="M14 4 V17 M14 4 C18 6 20 9 19 12" stroke="#2A7AC8" stroke-width="2" fill="none"/><circle cx="12" cy="18" r="3" fill="#2A7AC8"/></svg>
<div class="t" style="left:310px;top:764.50px;font-size:17.6px;color:#1E1E1E;font-weight:400;">Téléchargements</div>
<svg class="a" style="left:279px;top:760px" width="22" height="23" viewBox="0 0 22 23"><defs><linearGradient id="fg279_760" x1="0" y1="0" x2="1" y2="0"><stop offset="0" stop-color="#F4E49A"/><stop offset="0.3" stop-color="#FBF3C4"/><stop offset="0.5" stop-color="#D9BC55"/><stop offset="0.75" stop-color="#EEDC8C"/><stop offset="1" stop-color="#E2C868"/></linearGradient>
<linearGradient id="fg279_760b" x1="0" y1="0" x2="0" y2="1"><stop offset="0" stop-color="#FFFFFF" stop-opacity="0.25"/><stop offset="0.7" stop-color="#FFFFFF" stop-opacity="0"/><stop offset="1" stop-color="#A89030" stop-opacity="0.45"/></linearGradient></defs>
<path d="M1.5 2.5 Q1.5 1 3 1 H18 Q19.5 1 19.5 2.5 V20.5 Q19.5 22 18 22 H3 Q1.5 22 1.5 20.5 Z" fill="url(#fg279_760)"/><path d="M1.5 2.5 Q1.5 1 3 1 H18 Q19.5 1 19.5 2.5 V20.5 Q19.5 22 18 22 H3 Q1.5 22 1.5 20.5 Z" fill="url(#fg279_760b)"/><path d="M13 12 H19 V17 H22 L16 23 L10 17 H13 Z" fill="#2A8AD8"/></svg>
<div class="t" style="left:310px;top:796.00px;font-size:17.6px;color:#1E1E1E;font-weight:400;">Vidéos</div>
<svg class="a" style="left:279px;top:791px" width="22" height="23" viewBox="0 0 22 23"><defs><linearGradient id="fg279_791" x1="0" y1="0" x2="1" y2="0"><stop offset="0" stop-color="#F4E49A"/><stop offset="0.3" stop-color="#FBF3C4"/><stop offset="0.5" stop-color="#D9BC55"/><stop offset="0.75" stop-color="#EEDC8C"/><stop offset="1" stop-color="#E2C868"/></linearGradient>
<linearGradient id="fg279_791b" x1="0" y1="0" x2="0" y2="1"><stop offset="0" stop-color="#FFFFFF" stop-opacity="0.25"/><stop offset="0.7" stop-color="#FFFFFF" stop-opacity="0"/><stop offset="1" stop-color="#A89030" stop-opacity="0.45"/></linearGradient></defs>
<path d="M1.5 2.5 Q1.5 1 3 1 H18 Q19.5 1 19.5 2.5 V20.5 Q19.5 22 18 22 H3 Q1.5 22 1.5 20.5 Z" fill="url(#fg279_791)"/><path d="M1.5 2.5 Q1.5 1 3 1 H18 Q19.5 1 19.5 2.5 V20.5 Q19.5 22 18 22 H3 Q1.5 22 1.5 20.5 Z" fill="url(#fg279_791b)"/><rect x="11" y="7" width="9" height="15" fill="#3A4A5A"/><path d="M12 9 H19 M12 12 H19 M12 15 H19 M12 18 H19" stroke="#A8B8C8" stroke-width="1.2"/></svg>
<div class="t" style="left:310px;top:827.50px;font-size:17.6px;color:#1E1E1E;font-weight:400;">Acer (C:)</div>
<svg class="a" style="left:278px;top:821px" width="26" height="26" viewBox="0 0 26 26"><rect x="2" y="1" width="5.5" height="5.5" fill="#38C0E0"/><rect x="8.5" y="1" width="5.5" height="5.5" fill="#38C0E0"/><rect x="2" y="7.5" width="5.5" height="5.5" fill="#38C0E0"/><rect x="8.5" y="7.5" width="5.5" height="5.5" fill="#38C0E0"/><path d="M1 15 L3 13 H22 L24 15 V24 H1 Z" fill="#8AA0A8"/><rect x="1" y="17" width="23" height="7" fill="#6A848E"/><rect x="3" y="19.5" width="12" height="2" fill="#9AB4BE"/></svg>
<div class="t" style="left:296px;top:890.50px;font-size:17.6px;color:#1E1E1E;font-weight:400;">Réseau</div>
<svg class="a" style="left:263px;top:887px" width="28" height="24" viewBox="0 0 28 24"><circle cx="8" cy="9" r="7" fill="#2A9A8A"/><path d="M3 6 Q8 3 13 7 Q10 12 4 12 Z" fill="#48C0E8"/><rect x="11" y="7" width="14" height="11" fill="#1E3FA0" stroke="#6A7888"/><rect x="16" y="18" width="4" height="3" fill="#6A7888"/><rect x="12" y="20" width="12" height="2" fill="#8A949E"/></svg>
</div>
<div class="a" style="left:494px;top:478px;width:862px;height:33px;background:#F7F7F7;border:1px solid #E6E6E6"></div>
<svg class="a" style="left:500px;top:263px" width="22" height="23" viewBox="0 0 22 23"><defs><linearGradient id="fg500_263" x1="0" y1="0" x2="1" y2="0"><stop offset="0" stop-color="#F4E49A"/><stop offset="0.3" stop-color="#FBF3C4"/><stop offset="0.5" stop-color="#D9BC55"/><stop offset="0.75" stop-color="#EEDC8C"/><stop offset="1" stop-color="#E2C868"/></linearGradient>
<linearGradient id="fg500_263b" x1="0" y1="0" x2="0" y2="1"><stop offset="0" stop-color="#FFFFFF" stop-opacity="0.25"/><stop offset="0.7" stop-color="#FFFFFF" stop-opacity="0"/><stop offset="1" stop-color="#A89030" stop-opacity="0.45"/></linearGradient></defs>
<path d="M1.5 2.5 Q1.5 1 3 1 H18 Q19.5 1 19.5 2.5 V20.5 Q19.5 22 18 22 H3 Q1.5 22 1.5 20.5 Z" fill="url(#fg500_263)"/><path d="M1.5 2.5 Q1.5 1 3 1 H18 Q19.5 1 19.5 2.5 V20.5 Q19.5 22 18 22 H3 Q1.5 22 1.5 20.5 Z" fill="url(#fg500_263b)"/></svg>
<div class="t" style="left:530.5px;top:266.33px;font-size:17.8px;color:#1E1E1E;font-weight:400;">Regie_numerique</div>
<div class="t" style="left:890px;top:267.01px;font-size:17px;color:#6D6D6D;font-weight:400;">03/12/2013 22:48</div>
<div class="t" style="left:1070px;top:266.33px;font-size:17.8px;color:#6D6D6D;font-weight:400;">Dossier de fichiers</div>
<svg class="a" style="left:500px;top:295px" width="22" height="23" viewBox="0 0 22 23"><defs><linearGradient id="fg500_295" x1="0" y1="0" x2="1" y2="0"><stop offset="0" stop-color="#F4E49A"/><stop offset="0.3" stop-color="#FBF3C4"/><stop offset="0.5" stop-color="#D9BC55"/><stop offset="0.75" stop-color="#EEDC8C"/><stop offset="1" stop-color="#E2C868"/></linearGradient>
<linearGradient id="fg500_295b" x1="0" y1="0" x2="0" y2="1"><stop offset="0" stop-color="#FFFFFF" stop-opacity="0.25"/><stop offset="0.7" stop-color="#FFFFFF" stop-opacity="0"/><stop offset="1" stop-color="#A89030" stop-opacity="0.45"/></linearGradient></defs>
<path d="M1.5 2.5 Q1.5 1 3 1 H18 Q19.5 1 19.5 2.5 V20.5 Q19.5 22 18 22 H3 Q1.5 22 1.5 20.5 Z" fill="url(#fg500_295)"/><path d="M1.5 2.5 Q1.5 1 3 1 H18 Q19.5 1 19.5 2.5 V20.5 Q19.5 22 18 22 H3 Q1.5 22 1.5 20.5 Z" fill="url(#fg500_295b)"/></svg>
<div class="t" style="left:530.5px;top:297.83px;font-size:17.8px;color:#1E1E1E;font-weight:400;">Sauvegarde PC</div>
<div class="t" style="left:890px;top:298.51px;font-size:17px;color:#6D6D6D;font-weight:400;">15/05/2015 20:36</div>
<div class="t" style="left:1070px;top:297.83px;font-size:17.8px;color:#6D6D6D;font-weight:400;">Dossier de fichiers</div>
<svg class="a" style="left:500px;top:326px" width="22" height="23" viewBox="0 0 22 23"><defs><linearGradient id="fg500_326" x1="0" y1="0" x2="1" y2="0"><stop offset="0" stop-color="#F4E49A"/><stop offset="0.3" stop-color="#FBF3C4"/><stop offset="0.5" stop-color="#D9BC55"/><stop offset="0.75" stop-color="#EEDC8C"/><stop offset="1" stop-color="#E2C868"/></linearGradient>
<linearGradient id="fg500_326b" x1="0" y1="0" x2="0" y2="1"><stop offset="0" stop-color="#FFFFFF" stop-opacity="0.25"/><stop offset="0.7" stop-color="#FFFFFF" stop-opacity="0"/><stop offset="1" stop-color="#A89030" stop-opacity="0.45"/></linearGradient></defs>
<path d="M1.5 2.5 Q1.5 1 3 1 H18 Q19.5 1 19.5 2.5 V20.5 Q19.5 22 18 22 H3 Q1.5 22 1.5 20.5 Z" fill="url(#fg500_326)"/><path d="M1.5 2.5 Q1.5 1 3 1 H18 Q19.5 1 19.5 2.5 V20.5 Q19.5 22 18 22 H3 Q1.5 22 1.5 20.5 Z" fill="url(#fg500_326b)"/></svg>
<div class="t" style="left:530.5px;top:329.33px;font-size:17.8px;color:#1E1E1E;font-weight:400;">Scene_de_crime</div>
<div class="t" style="left:890px;top:330.01px;font-size:17px;color:#6D6D6D;font-weight:400;">12/03/2015 19:50</div>
<div class="t" style="left:1070px;top:329.33px;font-size:17.8px;color:#6D6D6D;font-weight:400;">Dossier de fichiers</div>
<svg class="a" style="left:500px;top:357px" width="22" height="23" viewBox="0 0 22 23"><defs><linearGradient id="fg500_357" x1="0" y1="0" x2="1" y2="0"><stop offset="0" stop-color="#F4E49A"/><stop offset="0.3" stop-color="#FBF3C4"/><stop offset="0.5" stop-color="#D9BC55"/><stop offset="0.75" stop-color="#EEDC8C"/><stop offset="1" stop-color="#E2C868"/></linearGradient>
<linearGradient id="fg500_357b" x1="0" y1="0" x2="0" y2="1"><stop offset="0" stop-color="#FFFFFF" stop-opacity="0.25"/><stop offset="0.7" stop-color="#FFFFFF" stop-opacity="0"/><stop offset="1" stop-color="#A89030" stop-opacity="0.45"/></linearGradient></defs>
<path d="M1.5 2.5 Q1.5 1 3 1 H18 Q19.5 1 19.5 2.5 V20.5 Q19.5 22 18 22 H3 Q1.5 22 1.5 20.5 Z" fill="url(#fg500_357)"/><path d="M1.5 2.5 Q1.5 1 3 1 H18 Q19.5 1 19.5 2.5 V20.5 Q19.5 22 18 22 H3 Q1.5 22 1.5 20.5 Z" fill="url(#fg500_357b)"/></svg>
<div class="t" style="left:530.5px;top:360.83px;font-size:17.8px;color:#1E1E1E;font-weight:400;">Tete_3d</div>
<div class="t" style="left:890px;top:361.51px;font-size:17px;color:#6D6D6D;font-weight:400;">04/04/2014 20:10</div>
<div class="t" style="left:1070px;top:360.83px;font-size:17.8px;color:#6D6D6D;font-weight:400;">Dossier de fichiers</div>
<svg class="a" style="left:500px;top:389px" width="22" height="23" viewBox="0 0 22 23"><defs><linearGradient id="fg500_389" x1="0" y1="0" x2="1" y2="0"><stop offset="0" stop-color="#F4E49A"/><stop offset="0.3" stop-color="#FBF3C4"/><stop offset="0.5" stop-color="#D9BC55"/><stop offset="0.75" stop-color="#EEDC8C"/><stop offset="1" stop-color="#E2C868"/></linearGradient>
<linearGradient id="fg500_389b" x1="0" y1="0" x2="0" y2="1"><stop offset="0" stop-color="#FFFFFF" stop-opacity="0.25"/><stop offset="0.7" stop-color="#FFFFFF" stop-opacity="0"/><stop offset="1" stop-color="#A89030" stop-opacity="0.45"/></linearGradient></defs>
<path d="M1.5 2.5 Q1.5 1 3 1 H18 Q19.5 1 19.5 2.5 V20.5 Q19.5 22 18 22 H3 Q1.5 22 1.5 20.5 Z" fill="url(#fg500_389)"/><path d="M1.5 2.5 Q1.5 1 3 1 H18 Q19.5 1 19.5 2.5 V20.5 Q19.5 22 18 22 H3 Q1.5 22 1.5 20.5 Z" fill="url(#fg500_389b)"/></svg>
<div class="t" style="left:530.5px;top:392.33px;font-size:17.8px;color:#1E1E1E;font-weight:400;">Weo</div>
<div class="t" style="left:890px;top:393.01px;font-size:17px;color:#6D6D6D;font-weight:400;">27/05/2015 12:08</div>
<div class="t" style="left:1070px;top:392.33px;font-size:17.8px;color:#6D6D6D;font-weight:400;">Dossier de fichiers</div>
<svg class="a" style="left:500px;top:421px" width="22" height="23" viewBox="0 0 22 23"><defs><linearGradient id="fg500_421" x1="0" y1="0" x2="1" y2="0"><stop offset="0" stop-color="#F4E49A"/><stop offset="0.3" stop-color="#FBF3C4"/><stop offset="0.5" stop-color="#D9BC55"/><stop offset="0.75" stop-color="#EEDC8C"/><stop offset="1" stop-color="#E2C868"/></linearGradient>
<linearGradient id="fg500_421b" x1="0" y1="0" x2="0" y2="1"><stop offset="0" stop-color="#FFFFFF" stop-opacity="0.25"/><stop offset="0.7" stop-color="#FFFFFF" stop-opacity="0"/><stop offset="1" stop-color="#A89030" stop-opacity="0.45"/></linearGradient></defs>
<path d="M1.5 2.5 Q1.5 1 3 1 H18 Q19.5 1 19.5 2.5 V20.5 Q19.5 22 18 22 H3 Q1.5 22 1.5 20.5 Z" fill="url(#fg500_421)"/><path d="M1.5 2.5 Q1.5 1 3 1 H18 Q19.5 1 19.5 2.5 V20.5 Q19.5 22 18 22 H3 Q1.5 22 1.5 20.5 Z" fill="url(#fg500_421b)"/></svg>
<div class="t" style="left:530.5px;top:423.83px;font-size:17.8px;color:#1E1E1E;font-weight:400;">witnesscope</div>
<div class="t" style="left:890px;top:424.51px;font-size:17px;color:#6D6D6D;font-weight:400;">15/05/2015 20:36</div>
<div class="t" style="left:1070px;top:423.83px;font-size:17.8px;color:#6D6D6D;font-weight:400;">Dossier de fichiers</div>
<svg class="a" style="left:500px;top:451px" width="25" height="25" viewBox="0 0 25 25"><path d="M4 1.5 H17 L22 6.5 V23.5 H4 Z" fill="#FFFFFF" stroke="#A0A8B4" stroke-width="1.2"/><path d="M17 1.5 V6.5 H22" fill="#E6E6E6" stroke="#A0A8B4" stroke-width="1"/><line x1="9" y1="8" x2="20" y2="8" stroke="#8A9AAE" stroke-width="1.4"/><line x1="9" y1="11" x2="20" y2="11" stroke="#8A9AAE" stroke-width="1.4"/><line x1="9" y1="14" x2="20" y2="14" stroke="#8A9AAE" stroke-width="1.4"/><line x1="9" y1="17" x2="20" y2="17" stroke="#8A9AAE" stroke-width="1.4"/><line x1="9" y1="20" x2="20" y2="20" stroke="#8A9AAE" stroke-width="1.4"/><rect x="0.5" y="4" width="10" height="15" fill="#2B4F96"/><path d="M2 7.5 L3.5 15.5 L5.5 10.5 L7.5 15.5 L9 7.5" stroke="#BFD0F0" stroke-width="1.1" fill="none"/></svg>
<div class="t" style="left:530.5px;top:455.33px;font-size:17.8px;color:#1E1E1E;font-weight:400;">Architecture</div>
<div class="t" style="left:890px;top:456.01px;font-size:17px;color:#6D6D6D;font-weight:400;">06/02/2014 19:53</div>
<div class="t" style="left:1070px;top:455.33px;font-size:17.8px;color:#6D6D6D;font-weight:400;">Microsoft Word D...</div>
<div class="t" style="left:749px;width:600px;text-align:right;top:456.01px;font-size:17px;color:#6D6D6D;font-weight:400;">823 Ko</div>
<svg class="a" style="left:500px;top:482px" width="25" height="25" viewBox="0 0 25 25"><path d="M4 1.5 H17 L22 6.5 V23.5 H4 Z" fill="#FCFBFC" stroke="#E6E6E6" stroke-width="1.2"/><path d="M17 1.5 V6.5 H22" fill="#E6E6E6" stroke="#E6E6E6" stroke-width="1"/><rect x="0.5" y="3.5" width="16" height="6" fill="#D42818"/><path d="M15 9 Q13 15 8.5 20.5" stroke="#B84A50" stroke-width="2" fill="none"/><path d="M11 15 L14.5 17.5" stroke="#C06070" stroke-width="1.4"/><rect x="4" y="22.5" width="18" height="1.5" fill="#B0B0B0"/></svg>
<div class="t" style="left:530.5px;top:486.83px;font-size:17.8px;color:#1E1E1E;font-weight:400;">Architecture</div>
<div class="t" style="left:890px;top:487.51px;font-size:17px;color:#6D6D6D;font-weight:400;">06/02/2014 22:06</div>
<div class="t" style="left:1070px;top:486.83px;font-size:17.8px;color:#6D6D6D;font-weight:400;">Adobe Acrobat D...</div>
<div class="t" style="left:749px;width:600px;text-align:right;top:487.51px;font-size:17px;color:#6D6D6D;font-weight:400;">699 Ko</div>
<svg class="a" style="left:500px;top:514px" width="25" height="25" viewBox="0 0 25 25"><path d="M4 1.5 H17 L22 6.5 V23.5 H4 Z" fill="#F6F6F6" stroke="#A0A0A0" stroke-width="1.2"/><path d="M17 1.5 V6.5 H22" fill="#E6E6E6" stroke="#A0A0A0" stroke-width="1"/><line x1="5" y1="9" x2="21" y2="9" stroke="#C4C4C4" stroke-width="1.1"/><line x1="5" y1="12" x2="21" y2="12" stroke="#C4C4C4" stroke-width="1.1"/><line x1="5" y1="15" x2="21" y2="15" stroke="#C4C4C4" stroke-width="1.1"/><line x1="5" y1="18" x2="21" y2="18" stroke="#C4C4C4" stroke-width="1.1"/><line x1="5" y1="21" x2="21" y2="21" stroke="#C4C4C4" stroke-width="1.1"/></svg>
<div class="t" style="left:530.5px;top:518.33px;font-size:17.8px;color:#1E1E1E;font-weight:400;">code_css_tuto</div>
<div class="t" style="left:890px;top:519.01px;font-size:17px;color:#6D6D6D;font-weight:400;">31/01/2014 18:25</div>
<div class="t" style="left:1070px;top:518.33px;font-size:17.8px;color:#6D6D6D;font-weight:400;">Fichier TXT</div>
<div class="t" style="left:749px;width:600px;text-align:right;top:519.01px;font-size:17px;color:#6D6D6D;font-weight:400;">2 Ko</div>
<svg class="a" style="left:500px;top:546px" width="25" height="25" viewBox="0 0 25 25"><path d="M4 1.5 H17 L22 6.5 V23.5 H4 Z" fill="#F6F6F6" stroke="#A0A0A0" stroke-width="1.2"/><path d="M17 1.5 V6.5 H22" fill="#E6E6E6" stroke="#A0A0A0" stroke-width="1"/><line x1="5" y1="9" x2="21" y2="9" stroke="#C4C4C4" stroke-width="1.1"/><line x1="5" y1="12" x2="21" y2="12" stroke="#C4C4C4" stroke-width="1.1"/><line x1="5" y1="15" x2="21" y2="15" stroke="#C4C4C4" stroke-width="1.1"/><line x1="5" y1="18" x2="21" y2="18" stroke="#C4C4C4" stroke-width="1.1"/><line x1="5" y1="21" x2="21" y2="21" stroke="#C4C4C4" stroke-width="1.1"/></svg>
<div class="t" style="left:530.5px;top:549.83px;font-size:17.8px;color:#1E1E1E;font-weight:400;">code_html_tuto</div>
<div class="t" style="left:890px;top:550.51px;font-size:17px;color:#6D6D6D;font-weight:400;">31/01/2014 18:23</div>
<div class="t" style="left:1070px;top:549.83px;font-size:17.8px;color:#6D6D6D;font-weight:400;">Fichier TXT</div>
<div class="t" style="left:749px;width:600px;text-align:right;top:550.51px;font-size:17px;color:#6D6D6D;font-weight:400;">2 Ko</div>
<svg class="a" style="left:500px;top:577px" width="25" height="25" viewBox="0 0 25 25"><path d="M4 1.5 H17 L22 6.5 V23.5 H4 Z" fill="#FFFFFF" stroke="#A0A8B4" stroke-width="1.2"/><path d="M17 1.5 V6.5 H22" fill="#E6E6E6" stroke="#A0A8B4" stroke-width="1"/><line x1="9" y1="8" x2="20" y2="8" stroke="#8A9AAE" stroke-width="1.4"/><line x1="9" y1="11" x2="20" y2="11" stroke="#8A9AAE" stroke-width="1.4"/><line x1="9" y1="14" x2="20" y2="14" stroke="#8A9AAE" stroke-width="1.4"/><line x1="9" y1="17" x2="20" y2="17" stroke="#8A9AAE" stroke-width="1.4"/><line x1="9" y1="20" x2="20" y2="20" stroke="#8A9AAE" stroke-width="1.4"/><rect x="0.5" y="4" width="10" height="15" fill="#2B4F96"/><path d="M2 7.5 L3.5 15.5 L5.5 10.5 L7.5 15.5 L9 7.5" stroke="#BFD0F0" stroke-width="1.1" fill="none"/></svg>
<div class="t" style="left:530.5px;top:581.33px;font-size:17.8px;color:#1E1E1E;font-weight:400;">informations</div>
<div class="t" style="left:890px;top:582.01px;font-size:17px;color:#6D6D6D;font-weight:400;">25/01/2014 03:33</div>
<div class="t" style="left:1070px;top:581.33px;font-size:17.8px;color:#6D6D6D;font-weight:400;">Microsoft Word D...</div>
<div class="t" style="left:749px;width:600px;text-align:right;top:582.01px;font-size:17px;color:#6D6D6D;font-weight:400;">13 Ko</div>
<svg class="a" style="left:500px;top:608px" width="25" height="25" viewBox="0 0 25 25"><path d="M4 1.5 H17 L22 6.5 V23.5 H4 Z" fill="#FCFBFC" stroke="#E6E6E6" stroke-width="1.2"/><path d="M17 1.5 V6.5 H22" fill="#E6E6E6" stroke="#E6E6E6" stroke-width="1"/><rect x="0.5" y="3.5" width="16" height="6" fill="#D42818"/><path d="M15 9 Q13 15 8.5 20.5" stroke="#B84A50" stroke-width="2" fill="none"/><path d="M11 15 L14.5 17.5" stroke="#C06070" stroke-width="1.4"/><rect x="4" y="22.5" width="18" height="1.5" fill="#B0B0B0"/></svg>
<div class="t" style="left:530.5px;top:612.83px;font-size:17.8px;color:#1E1E1E;font-weight:400;">informations</div>
<div class="t" style="left:890px;top:613.51px;font-size:17px;color:#6D6D6D;font-weight:400;">25/01/2014 03:33</div>
<div class="t" style="left:1070px;top:612.83px;font-size:17.8px;color:#6D6D6D;font-weight:400;">Adobe Acrobat D...</div>
<div class="t" style="left:749px;width:600px;text-align:right;top:613.51px;font-size:17px;color:#6D6D6D;font-weight:400;">117 Ko</div>
<svg class="a" style="left:500px;top:640px" width="25" height="25" viewBox="0 0 25 25"><path d="M4 1.5 H17 L22 6.5 V23.5 H4 Z" fill="#FFFFFF" stroke="#A0A8B4" stroke-width="1.2"/><path d="M17 1.5 V6.5 H22" fill="#E6E6E6" stroke="#A0A8B4" stroke-width="1"/><line x1="9" y1="8" x2="20" y2="8" stroke="#8A9AAE" stroke-width="1.4"/><line x1="9" y1="11" x2="20" y2="11" stroke="#8A9AAE" stroke-width="1.4"/><line x1="9" y1="14" x2="20" y2="14" stroke="#8A9AAE" stroke-width="1.4"/><line x1="9" y1="17" x2="20" y2="17" stroke="#8A9AAE" stroke-width="1.4"/><line x1="9" y1="20" x2="20" y2="20" stroke="#8A9AAE" stroke-width="1.4"/><rect x="0.5" y="4" width="10" height="15" fill="#2B4F96"/><path d="M2 7.5 L3.5 15.5 L5.5 10.5 L7.5 15.5 L9 7.5" stroke="#BFD0F0" stroke-width="1.1" fill="none"/></svg>
<div class="t" style="left:530.5px;top:644.33px;font-size:17.8px;color:#1E1E1E;font-weight:400;">lettre_motivation_weo</div>
<div class="t" style="left:890px;top:645.01px;font-size:17px;color:#6D6D6D;font-weight:400;">28/11/2013 22:12</div>
<div class="t" style="left:1070px;top:644.33px;font-size:17.8px;color:#6D6D6D;font-weight:400;">Microsoft Word D...</div>
<div class="t" style="left:749px;width:600px;text-align:right;top:645.01px;font-size:17px;color:#6D6D6D;font-weight:400;">15 Ko</div>
<svg class="a" style="left:500px;top:672px" width="25" height="25" viewBox="0 0 25 25"><path d="M1.5 1.5 H17 L23 7.5 V23.5 H1.5 Z" fill="#E4E4E4" stroke="#7A7A7A" stroke-width="1"/><path d="M1.5 1.5 H17 L23 7.5 V12 H1.5 Z" fill="#333333"/><text x="12.5" y="21.5" font-family="Liberation Sans" font-size="8.5" font-weight="700" fill="#555" text-anchor="middle">FBX</text></svg>
<div class="t" style="left:530.5px;top:675.83px;font-size:17.8px;color:#1E1E1E;font-weight:400;">MVI_4407</div>
<div class="t" style="left:890px;top:676.51px;font-size:17px;color:#6D6D6D;font-weight:400;">25/01/2014 01:19</div>
<div class="t" style="left:1070px;top:675.83px;font-size:17.8px;color:#6D6D6D;font-weight:400;">Fichier FBX</div>
<div class="t" style="left:749px;width:600px;text-align:right;top:676.51px;font-size:17px;color:#6D6D6D;font-weight:400;">281 Ko</div>
<svg class="a" style="left:500px;top:703px" width="25" height="25" viewBox="0 0 25 25"><path d="M4 1.5 H17 L22 6.5 V23.5 H4 Z" fill="#FFFFFF" stroke="#B0B0B0" stroke-width="1.2"/><path d="M17 1.5 V6.5 H22" fill="#E6E6E6" stroke="#B0B0B0" stroke-width="1"/></svg>
<div class="t" style="left:530.5px;top:707.33px;font-size:17.8px;color:#1E1E1E;font-weight:400;">MVI_4407.ma</div>
<div class="t" style="left:890px;top:708.01px;font-size:17px;color:#6D6D6D;font-weight:400;">25/01/2014 00:27</div>
<div class="t" style="left:1070px;top:707.33px;font-size:17.8px;color:#6D6D6D;font-weight:400;">Fichier MA</div>
<div class="t" style="left:749px;width:600px;text-align:right;top:708.01px;font-size:17px;color:#6D6D6D;font-weight:400;">30 Ko</div>
<svg class="a" style="left:500px;top:734px" width="25" height="25" viewBox="0 0 25 25"><path d="M1.5 1.5 H17 L23 7.5 V23.5 H1.5 Z" fill="#EDEDED" stroke="#333" stroke-width="1.8"/><path d="M17 1.5 V7.5 H23" fill="#FFF" stroke="#333" stroke-width="1.2"/><rect x="3" y="12.5" width="18" height="9.5" fill="#FFFFFF"/><text x="12" y="21.5" font-family="Liberation Sans" font-size="10" font-weight="700" fill="#303030" text-anchor="middle">ms</text></svg>
<div class="t" style="left:530.5px;top:738.83px;font-size:17.8px;color:#1E1E1E;font-weight:400;">MVI_4407</div>
<div class="t" style="left:890px;top:739.51px;font-size:17px;color:#6D6D6D;font-weight:400;">25/01/2014 01:20</div>
<div class="t" style="left:1070px;top:738.83px;font-size:17.8px;color:#6D6D6D;font-weight:400;">3dsMax maxscript ...</div>
<div class="t" style="left:749px;width:600px;text-align:right;top:739.51px;font-size:17px;color:#6D6D6D;font-weight:400;">138 Ko</div>
<svg class="a" style="left:500px;top:766px" width="25" height="25" viewBox="0 0 25 25"><path d="M1.5 1.5 H17 L23 7.5 V23.5 H1.5 Z" fill="#E4E4E4" stroke="#7A7A7A" stroke-width="1"/><path d="M1.5 1.5 H17 L23 7.5 V12 H1.5 Z" fill="#333333"/><text x="12.5" y="21.5" font-family="Liberation Sans" font-size="8.5" font-weight="700" fill="#555" text-anchor="middle">FBX</text></svg>
<div class="t" style="left:530.5px;top:770.33px;font-size:17.8px;color:#1E1E1E;font-weight:400;">MVI_4409</div>
<div class="t" style="left:890px;top:771.01px;font-size:17px;color:#6D6D6D;font-weight:400;">25/01/2014 01:22</div>
<div class="t" style="left:1070px;top:770.33px;font-size:17.8px;color:#6D6D6D;font-weight:400;">Fichier FBX</div>
<div class="t" style="left:749px;width:600px;text-align:right;top:771.01px;font-size:17px;color:#6D6D6D;font-weight:400;">308 Ko</div>
<svg class="a" style="left:500px;top:798px" width="25" height="25" viewBox="0 0 25 25"><path d="M1.5 1.5 H17 L23 7.5 V23.5 H1.5 Z" fill="#EDEDED" stroke="#333" stroke-width="1.8"/><path d="M17 1.5 V7.5 H23" fill="#FFF" stroke="#333" stroke-width="1.2"/><rect x="3" y="12.5" width="18" height="9.5" fill="#FFFFFF"/><text x="12" y="21.5" font-family="Liberation Sans" font-size="10" font-weight="700" fill="#303030" text-anchor="middle">ms</text></svg>
<div class="t" style="left:530.5px;top:801.83px;font-size:17.8px;color:#1E1E1E;font-weight:400;">MVI_4409</div>
<div class="t" style="left:890px;top:802.51px;font-size:17px;color:#6D6D6D;font-weight:400;">25/01/2014 01:22</div>
<div class="t" style="left:1070px;top:801.83px;font-size:17.8px;color:#6D6D6D;font-weight:400;">3dsMax maxscript ...</div>
<div class="t" style="left:749px;width:600px;text-align:right;top:802.51px;font-size:17px;color:#6D6D6D;font-weight:400;">101 Ko</div>
<svg class="a" style="left:500px;top:829px" width="25" height="25" viewBox="0 0 25 25"><path d="M4 1.5 H17 L22 6.5 V23.5 H4 Z" fill="#FFFFFF" stroke="#B4ACBC" stroke-width="1.2"/><path d="M17 1.5 V6.5 H22" fill="#E6E6E6" stroke="#B4ACBC" stroke-width="1"/><circle cx="11" cy="13" r="6" fill="none" stroke="#2A9AE0" stroke-width="3"/><rect x="5" y="12" width="12" height="2.2" fill="#2A9AE0"/><rect x="13" y="14.5" width="6" height="3" fill="#FFF"/><path d="M3 10 Q9 4 18 7" stroke="#E8C020" stroke-width="1.4" fill="none"/></svg>
<div class="t" style="left:530.5px;top:833.33px;font-size:17.8px;color:#1E1E1E;font-weight:400;">page_teaser_alex</div>
<div class="t" style="left:890px;top:834.01px;font-size:17px;color:#6D6D6D;font-weight:400;">03/01/2014 16:20</div>
<div class="t" style="left:1070px;top:833.33px;font-size:17.8px;color:#6D6D6D;font-weight:400;">Document HTML</div>
<div class="t" style="left:749px;width:600px;text-align:right;top:834.01px;font-size:17px;color:#6D6D6D;font-weight:400;">1 Ko</div>
<svg class="a" style="left:500px;top:860px" width="25" height="25" viewBox="0 0 25 25"><path d="M4 1.5 H17 L22 6.5 V23.5 H4 Z" fill="#FCFBFC" stroke="#E6E6E6" stroke-width="1.2"/><path d="M17 1.5 V6.5 H22" fill="#E6E6E6" stroke="#E6E6E6" stroke-width="1"/><rect x="0.5" y="3.5" width="16" height="6" fill="#D42818"/><path d="M15 9 Q13 15 8.5 20.5" stroke="#B84A50" stroke-width="2" fill="none"/><path d="M11 15 L14.5 17.5" stroke="#C06070" stroke-width="1.4"/><rect x="4" y="22.5" width="18" height="1.5" fill="#B0B0B0"/></svg>
<div class="t" style="left:530.5px;top:864.83px;font-size:17.8px;color:#1E1E1E;font-weight:400;">PDF</div>
<div class="t" style="left:890px;top:865.51px;font-size:17px;color:#6D6D6D;font-weight:400;">27/05/2015 16:13</div>
<div class="t" style="left:1070px;top:864.83px;font-size:17.8px;color:#6D6D6D;font-weight:400;">Adobe Acrobat D...</div>
<div class="t" style="left:749px;width:600px;text-align:right;top:865.51px;font-size:17px;color:#6D6D6D;font-weight:400;">698 Ko</div>
<svg class="a" style="left:500px;top:892px" width="25" height="25" viewBox="0 0 25 25"><path d="M4 1.5 H17 L22 6.5 V23.5 H4 Z" fill="#F6F6F6" stroke="#A0A0A0" stroke-width="1.2"/><path d="M17 1.5 V6.5 H22" fill="#E6E6E6" stroke="#A0A0A0" stroke-width="1"/><line x1="5" y1="9" x2="21" y2="9" stroke="#C4C4C4" stroke-width="1.1"/><line x1="5" y1="12" x2="21" y2="12" stroke="#C4C4C4" stroke-width="1.1"/><line x1="5" y1="15" x2="21" y2="15" stroke="#C4C4C4" stroke-width="1.1"/><line x1="5" y1="18" x2="21" y2="18" stroke="#C4C4C4" stroke-width="1.1"/><line x1="5" y1="21" x2="21" y2="21" stroke="#C4C4C4" stroke-width="1.1"/></svg>
<div class="t" style="left:530.5px;top:896.33px;font-size:17.8px;color:#1E1E1E;font-weight:400;">pftrack 2011.1</div>
<div class="t" style="left:890px;top:897.01px;font-size:17px;color:#6D6D6D;font-weight:400;">25/01/2014 02:48</div>
<div class="t" style="left:1070px;top:896.33px;font-size:17.8px;color:#6D6D6D;font-weight:400;">Document texte</div>
<div class="t" style="left:749px;width:600px;text-align:right;top:897.01px;font-size:17px;color:#6D6D6D;font-weight:400;">126 Ko</div>
<svg class="a" style="left:500px;top:924px" width="25" height="25" viewBox="0 0 25 25"><path d="M4 1.5 H17 L22 6.5 V23.5 H4 Z" fill="#FFFFFF" stroke="#B8B8B8" stroke-width="1.2"/><path d="M17 1.5 V6.5 H22" fill="#E6E6E6" stroke="#B8B8B8" stroke-width="1"/><line x1="9" y1="14" x2="20" y2="14" stroke="#C8C8C8" stroke-width="1"/><line x1="9" y1="17" x2="20" y2="17" stroke="#C8C8C8" stroke-width="1"/><line x1="9" y1="20" x2="20" y2="20" stroke="#C8C8C8" stroke-width="1"/><rect x="0.5" y="3" width="15" height="6" fill="#1E3E1E"/><rect x="2" y="4.5" width="11" height="2.5" fill="#3A6A3A"/><rect x="9" y="15" width="9" height="6" fill="#D0D0D0"/></svg>
<div class="t" style="left:530.5px;top:927.83px;font-size:17.8px;color:#1E1E1E;font-weight:400;">style_alex</div>
<div class="t" style="left:890px;top:928.51px;font-size:17px;color:#6D6D6D;font-weight:400;">21/11/2013 23:26</div>
<div class="t" style="left:1070px;top:927.83px;font-size:17.8px;color:#6D6D6D;font-weight:400;">Document de feui...</div>
<div class="t" style="left:749px;width:600px;text-align:right;top:928.51px;font-size:17px;color:#6D6D6D;font-weight:400;">1 Ko</div>
<svg class="a" style="left:500px;top:955px" width="25" height="25" viewBox="0 0 25 25"><rect x="2.5" y="2" width="20" height="21" fill="#24105A" stroke="#4A30A0" stroke-width="1.2"/><rect x="0" y="3" width="9" height="5" fill="#7A6AC8" opacity="0.8"/><text x="13" y="20" font-family="Liberation Sans" font-size="9" font-weight="700" fill="#B8A8F8" text-anchor="middle">Ae</text></svg>
<div class="t" style="left:530.5px;top:959.33px;font-size:17.8px;color:#1E1E1E;font-weight:400;">Test_trapcode</div>
<div class="t" style="left:890px;top:960.01px;font-size:17px;color:#6D6D6D;font-weight:400;">28/01/2015 20:34</div>
<div class="t" style="left:1070px;top:959.33px;font-size:17.8px;color:#6D6D6D;font-weight:400;">Adobe After Effect...</div>
<div class="t" style="left:749px;width:600px;text-align:right;top:960.01px;font-size:17px;color:#6D6D6D;font-weight:400;">148 Ko</div>
<div class="a" style="left:233px;top:119px;width:1458px;height:139px;background:#F5F6F7;border-top:1px solid #DCDDDE;border-bottom:2px solid #E3E4E5;display:none"></div>
<div class="a" style="left:1667px;top:258px;width:24px;height:727px;background:#EFEFEF"></div>
<div class="a" style="left:1668px;top:527px;width:22px;height:432px;background:#C8C8C8"></div>
<svg class="a" style="left:1671px;top:964px" width="14" height="12" viewBox="0 0 14 12"><path d="M2 3 L7 8 L12 3" stroke="#404040" stroke-width="2.2" fill="none"/></svg>
<div class="t" style="left:254px;top:994.11px;font-size:17px;color:#3B4250;font-weight:400;">43 élément(s)</div>
<div class="t" style="left:392px;top:994.11px;font-size:17px;color:#3B4250;font-weight:400;">1 élément sélectionné  698 Ko</div>
<div class="a" style="left:1619px;top:984px;width:34px;height:36px;background:#CDEEFB;border:1px solid #7AB8D4"></div>
<svg class="a" style="left:1624px;top:990px" width="26" height="24" viewBox="0 0 26 24"><path d="M4 3 V21" stroke="#9AB8CC" stroke-width="3" stroke-dasharray="2 2"/><path d="M9 9 H15 M17 9 H23 M9 14 H15 M17 14 H23 M9 19 H15 M17 19 H23" stroke="#3A4A5E" stroke-width="1.8"/></svg>
<svg class="a" style="left:1657px;top:990px" width="24" height="21" viewBox="0 0 24 21"><rect x="1.5" y="3" width="20" height="16" fill="#EEF5FA" stroke="#A8B4C0" stroke-width="1.3"/><path d="M3 17.5 V10 Q9 14 20 13.5 V17.5 Z" fill="#3A7676"/></svg>
<svg class="a" style="left:596px;top:99px" width="22" height="32" viewBox="0 0 22 32"><path d="M2 1.5 V24 L7.5 19 L11.5 27.5 L15 26 L11 17.5 H18 Z" fill="#FFFFFF" stroke="#666" stroke-width="1.4" stroke-linejoin="round"/></svg>
</div></body></html>
